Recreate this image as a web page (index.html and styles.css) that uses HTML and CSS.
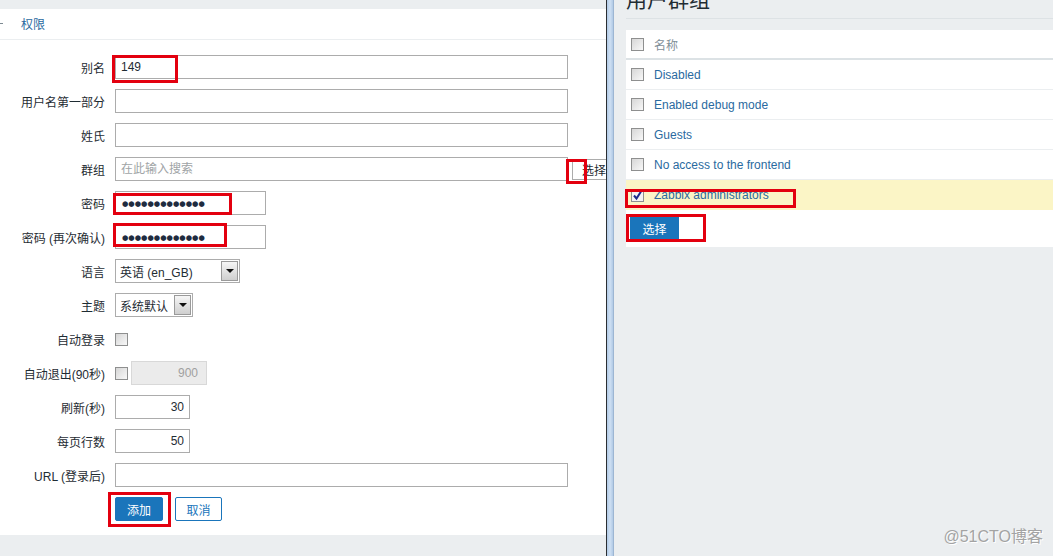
FILE: index.html
```html
<!DOCTYPE html>
<html lang="zh-CN">
<head>
    <meta charset="UTF-8">
    <title>用户群组</title>
    <link rel="stylesheet" href="styles.css">
</head>
<body>
    <div class="screen">
        <!-- User form (page behind the popup) -->
        <div class="page">
            <div class="panel">
                <div class="tabs">
                    <span class="tab-dash"></span>
                    <a class="tab">权限</a>
                </div>

                <form class="form">
                    <div class="row">
                        <label>别名</label>
                        <div class="field">
                            <input class="text wide" value="149">
                            <span class="mark mark-alias"></span>
                        </div>
                    </div>
                    <div class="row">
                        <label>用户名第一部分</label>
                        <div class="field"><input class="text wide"></div>
                    </div>
                    <div class="row">
                        <label>姓氏</label>
                        <div class="field"><input class="text wide"></div>
                    </div>
                    <div class="row">
                        <label>群组</label>
                        <div class="field">
                            <input class="text wide" placeholder="在此输入搜索">
                            <button type="button" class="btn-pick">选择</button>
                            <span class="mark mark-pick"></span>
                        </div>
                    </div>
                    <div class="row">
                        <label>密码</label>
                        <div class="field">
                            <div class="text pass">●●●●●●●●●●●●●</div>
                            <span class="mark mark-pass"></span>
                        </div>
                    </div>
                    <div class="row">
                        <label>密码 (再次确认)</label>
                        <div class="field">
                            <div class="text pass">●●●●●●●●●●●●●</div>
                            <span class="mark mark-pass2"></span>
                        </div>
                    </div>
                    <div class="row">
                        <label>语言</label>
                        <div class="field">
                            <div class="select lang">英语 (en_GB)<span class="arrow"></span></div>
                        </div>
                    </div>
                    <div class="row">
                        <label>主题</label>
                        <div class="field">
                            <div class="select theme">系统默认<span class="arrow"></span></div>
                        </div>
                    </div>
                    <div class="row">
                        <label>自动登录</label>
                        <div class="field"><span class="check"></span></div>
                    </div>
                    <div class="row">
                        <label>自动退出(90秒)</label>
                        <div class="field">
                            <span class="check"></span>
                            <input class="text num off" value="900" disabled>
                        </div>
                    </div>
                    <div class="row">
                        <label>刷新(秒)</label>
                        <div class="field"><input class="text num" value="30"></div>
                    </div>
                    <div class="row">
                        <label>每页行数</label>
                        <div class="field"><input class="text num" value="50"></div>
                    </div>
                    <div class="row">
                        <label>URL (登录后)</label>
                        <div class="field"><input class="text wide"></div>
                    </div>
                    <div class="row">
                        <label></label>
                        <div class="field buttons">
                            <button type="button" class="btn">添加</button>
                            <button type="button" class="btn btn-alt">取消</button>
                            <span class="mark mark-add"></span>
                        </div>
                    </div>
                </form>
            </div>
        </div>

        <!-- Popup window edge -->
        <div class="frame"></div>

        <!-- Popup: user groups -->
        <div class="popup">
            <h2 class="popup-title">用户群组</h2>
            <div class="list">
                <div class="list-row list-head"><span class="check"></span>名称</div>
                <div class="list-row"><span class="check"></span><a>Disabled</a></div>
                <div class="list-row"><span class="check"></span><a>Enabled debug mode</a></div>
                <div class="list-row"><span class="check"></span><a>Guests</a></div>
                <div class="list-row"><span class="check"></span><a>No access to the frontend</a></div>
                <div class="list-row selected">
                    <span class="check checked">
                        <svg width="11" height="11" viewBox="0 0 11 11"><path d="M2 5.5 L4.5 8.5 L9 1.5" fill="none" stroke="#1c2a8c" stroke-width="2"/></svg>
                    </span>
                    <a>Zabbix administrators</a>
                    <span class="mark mark-zabbix"></span>
                </div>
                <div class="list-foot">
                    <button type="button" class="btn btn-select">选择</button>
                    <span class="mark mark-select"></span>
                </div>
            </div>
        </div>

        <div class="watermark">@51CTO博客</div>
    </div>
</body>
</html>
```

FILE: styles.css
```css
/* Reset and Base Styles */
* {
    margin: 0;
    padding: 0;
    box-sizing: border-box;
}

body {
    width: 1053px;
    height: 556px;
    overflow: hidden;
    background: #ebeef0;
    font: 12px "Liberation Sans", "Noto Sans CJK SC", sans-serif;
    color: #1f2c33;
}

.screen {
    display: flex;
    height: 556px;
    position: relative;
}

/* Left page */
.page {
    width: 606px;
    flex: none;
    overflow: hidden;
    padding-top: 9px;
}

.panel {
    width: 640px;
    height: 526px;
    background: #fff;
}

.tabs {
    height: 31px;
    border-bottom: 1px solid #ebeef0;
    display: flex;
    align-items: center;
    padding-bottom: 1px;
}

.tab-dash {
    width: 3px;
    height: 1px;
    background: #7d8a92;
    margin-right: 18px;
}

.tab {
    color: #2a6aa0;
}

/* Form */
.form {
    padding-top: 15px;
}

.row {
    display: flex;
    align-items: center;
    gap: 10px;
    height: 24px;
    margin-bottom: 10px;
}

.row label {
    width: 105px;
    text-align: right;
    flex: none;
}

.field {
    position: relative;
    display: flex;
    align-items: center;
    gap: 3px;
    height: 24px;
}

.text {
    height: 24px;
    border: 1px solid #acacac;
    background: #fff;
    padding: 0 5px;
    font: inherit;
    color: #1f2c33;
    outline: none;
}

.text::placeholder {
    color: #a0a4a6;
}

.wide {
    width: 453px;
}

.pass {
    width: 151px;
    display: flex;
    align-items: center;
    padding-left: 6px;
    font-family: "DejaVu Sans", sans-serif;
    font-size: 7.3px;
    color: #1f2c40;
}

.num {
    width: 75px;
    text-align: right;
}

.off {
    width: 76px;
    background: #ebebeb;
    border-color: #d8d8d8;
    color: #a0a0a0;
    padding-right: 8px;
}

.btn-pick {
    height: 21px;
    margin-left: 1px;
    padding: 0 4px 0 9px;
    border: 1px solid #acacac;
    background: #fff;
    font: inherit;
    color: #1f2c33;
}

/* Selects */
.select {
    height: 24px;
    border: 1px solid #acacac;
    display: flex;
    align-items: center;
    padding-left: 4px;
}

.lang {
    width: 125px;
}

.theme {
    width: 78px;
}

.arrow {
    margin-left: auto;
    margin-right: 1px;
    width: 17px;
    height: 20px;
    border: 1px solid #9a9a9a;
    background: linear-gradient(#f6f6f6, #cfcfcf);
    display: flex;
    align-items: center;
    justify-content: center;
}

.arrow::after {
    content: "";
    border-left: 4px solid transparent;
    border-right: 4px solid transparent;
    border-top: 4px solid #111;
}

/* Checkboxes */
.check {
    width: 13px;
    height: 13px;
    flex: none;
    border: 1px solid #8e8f8f;
    background: linear-gradient(135deg, #d6d6d6, #f8f8f8);
    display: flex;
    align-items: center;
    justify-content: center;
}

.checked {
    background: #f4f4f4;
}

/* Buttons */
.buttons {
    gap: 12px;
}

.btn {
    height: 24px;
    width: 48px;
    border: 1px solid #1a75bb;
    border-radius: 2px;
    background: #1a75bb;
    color: #fff;
    font: inherit;
}

.btn-alt {
    width: 47px;
    background: #fff;
    color: #1a75bb;
}

/* Red annotation boxes */
.mark {
    position: absolute;
    border: 3px solid #e3000f;
}

.mark-alias { left: -3px; top: 0; width: 66px; height: 28px; }
.mark-pick { left: 451px; top: 2px; width: 21px; height: 25px; }
.mark-pass { left: -2px; top: 2px; width: 119px; height: 22px; }
.mark-pass2 { left: -2px; top: -2px; width: 114px; height: 24px; }
.mark-add { left: -7px; top: -5px; width: 63px; height: 35px; }
.mark-zabbix { left: -1px; top: 9px; width: 171px; height: 19px; }
.mark-select { left: 0; top: 4px; width: 80px; height: 28px; }

/* Popup window */
.frame {
    width: 8px;
    flex: none;
    border-left: 1px solid #2a2e33;
    border-right: 1px solid #9db6d3;
    background: linear-gradient(90deg, #b1cae6, #cfe0f3 50%, #b1cae6);
}

.popup {
    flex: 1;
    padding-left: 12px;
    overflow: hidden;
}

.popup-title {
    margin-top: -11px;
    height: 30px;
    border-bottom: 1px solid #dde2e5;
    font-size: 21px;
    line-height: 21px;
    font-weight: normal;
    color: #1f2c33;
}

.list {
    margin-top: 11px;
    background: #fff;
}

.list-row {
    position: relative;
    height: 30px;
    display: flex;
    align-items: center;
    gap: 10px;
    padding-left: 5px;
    border-bottom: 1px solid #ebeef0;
}

.list-row a {
    color: #2a6aa0;
}

.list-head {
    border-bottom: 2px solid #dce2e5;
    color: #7f8f98;
}

.selected {
    background: #fbf5c6;
    border-bottom: none;
}

.list-foot {
    position: relative;
    height: 37px;
    padding: 7px 0 0 4px;
}

.btn-select {
    width: 49px;
    height: 23px;
    border-radius: 0;
}

/* Watermark */
.watermark {
    position: absolute;
    right: 10px;
    bottom: 9px;
    font-size: 16px;
    color: #a3a3a3;
    text-shadow: 1px 1px 0 #fff;
}
```
